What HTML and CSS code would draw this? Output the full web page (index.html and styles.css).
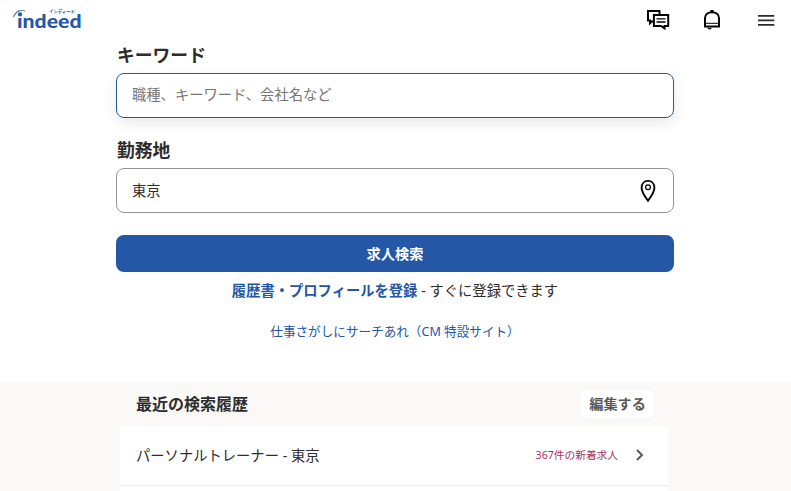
FILE: index.html
```
<!DOCTYPE html>
<html lang="ja">
<head>
  <meta charset="UTF-8" />
  <meta name="viewport" content="width=device-width, initial-scale=1.0"/>
  <title>求人検索 | Indeed</title>
  <link rel="stylesheet" href="styles.css">
</head>
<body>
  <header class="header">
    <a class="logo" href="#" aria-label="Indeed">
      <svg width="74" height="28" viewBox="0 0 74 28">
        <path d="M1.3 11.5C2.2 6.5 7.2 2.6 13.3 5C8.5 3.6 4 6 1.3 11.5Z" fill="#2557a7" stroke="#2557a7" stroke-width=".4"/>
        <circle cx="8" cy="8.4" r="2.1" fill="#2557a7"/>
        <text class="logo-text" x="5" y="22" textLength="64.5" lengthAdjust="spacingAndGlyphs">ındeed</text>
        <text class="logo-kana" x="37" y="7.4" textLength="26" lengthAdjust="spacingAndGlyphs">インディード</text>
      </svg>
    </a>
    <nav class="nav">
      <a href="#" aria-label="メッセージ">
        <svg width="24" height="24" viewBox="0 0 24 24" fill="none" stroke="#000" stroke-width="2">
          <path d="M7 13.5H5.5L4 15.2V12.5H2V3H13.5V6"/>
          <path d="M7.9 7H22.2V18H18.5V20.3L15 18H7.9Z"/>
          <path d="M10.5 10.9H19.5M10.5 14H19.5" stroke-width="1.3"/>
        </svg>
      </a>
      <a href="#" aria-label="お知らせ">
        <svg width="24" height="24" viewBox="0 0 24 24" fill="none" stroke="#000" stroke-width="2">
          <path d="M5 18.6V10.3C5 6.5 8 4.2 12 4.2S19 6.5 19 10.3V18.6Z"/>
          <path d="M5 15.3H19" stroke-width="1"/>
          <path d="M12 2V4.5" stroke-width="3.2"/>
          <path d="M8 19.5C8 21.2 11 21.2 11 19.5" stroke-width="1.2"/>
        </svg>
      </a>
      <a href="#" aria-label="メニュー">
        <svg width="24" height="24" viewBox="0 0 24 24" fill="none" stroke="#2d2d2d" stroke-width="1.8">
          <path d="M4 7.9H20.3M4 12.4H20.3M4 16.9H20.3"/>
        </svg>
      </a>
    </nav>
  </header>

  <main>
    <form class="search">
      <label class="label" for="what">キーワード</label>
      <div class="field active">
        <input id="what" type="text" placeholder="職種、キーワード、会社名など">
      </div>
      <label class="label" for="where">勤務地</label>
      <div class="field">
        <input id="where" type="text" value="東京">
        <svg width="20" height="24" viewBox="0 0 20 24" fill="none" stroke="#000">
          <path d="M10 21.7C6.3 16.8 3.6 12.6 3.6 8.7C3.6 4.8 6.2 1.9 10 1.9S16.4 4.8 16.4 8.7C16.4 12.6 13.7 16.8 10 21.7Z" stroke-width="1.9"/>
          <circle cx="10" cy="8.3" r="2.4" stroke-width="1.2"/>
        </svg>
      </div>
      <button class="submit" type="button">求人検索</button>
    </form>
    <p class="resume"><a href="#">履歴書・プロフィールを登録</a> - すぐに登録できます</p>
    <p class="promo"><a href="#">仕事さがしにサーチあれ（CM 特設サイト）</a></p>
  </main>

  <section class="history">
    <div class="history-head">
      <h2>最近の検索履歴</h2>
      <button class="edit" type="button">編集する</button>
    </div>
    <div class="history-list">
      <a class="history-item" href="#">
        <span class="query">パーソナルトレーナー - 東京</span>
        <span class="count">367件の新着求人</span>
        <svg width="10" height="14" viewBox="0 0 10 14" fill="none" stroke="#595959" stroke-width="2">
          <path d="M2 2L7 7L2 12"/>
        </svg>
      </a>
    </div>
  </section>
</body>
</html>
```

FILE: styles.css
```
* {
  box-sizing: border-box;
}

body {
  margin: 0;
  font-family: "Noto Sans", "Noto Sans CJK JP", sans-serif;
  font-size: 14.4px;
  color: #2d2d2d;
  background: #fff;
}

a {
  color: #2557a7;
  text-decoration: none;
}

.header {
  display: flex;
  justify-content: space-between;
  align-items: center;
  height: 40px;
  padding: 0 13px 0 12px;
}

.logo,
.nav,
.nav a {
  display: flex;
}

.logo-text {
  font-family: Lato, sans-serif;
  font-size: 19.5px;
  font-weight: 900;
  fill: #2557a7;
}

.logo-kana {
  font-family: "Noto Sans CJK JP", sans-serif;
  font-size: 4.3px;
  font-weight: 700;
  fill: #2557a7;
}

.nav {
  gap: 30px;
  margin-top: -1px;
}

.search {
  display: flex;
  flex-direction: column;
  width: 558px;
  margin: 0 auto 0 116px;
}

.label {
  height: 28px;
  margin-bottom: 5px;
  padding-left: 1px;
  font-size: 17.8px;
  font-weight: 700;
  line-height: 30px;
}

.field {
  display: flex;
  align-items: center;
  height: 45px;
  padding: 0 15px;
  border: 1px solid #949494;
  border-radius: 8px;
}

.field.active {
  margin-bottom: 17px;
  border-color: #2557a7;
  box-shadow: 0 5px 14px rgba(0, 0, 0, 0.09);
}

.field input {
  flex: 1;
  min-width: 0;
  padding: 0 0 2px;
  border: 0;
  outline: 0;
  background: none;
  font: inherit;
  font-size: 14.3px;
  color: inherit;
}

.field input::placeholder {
  color: #767676;
}

.submit {
  height: 37px;
  margin-top: 22px;
  padding: 0 0 2px;
  border: 0;
  border-radius: 8px;
  background: #2557a7;
  font: inherit;
  font-size: 14.2px;
  font-weight: 700;
  color: #fff;
}

.resume,
.promo {
  width: 558px;
  margin: 0 0 0 116px;
  text-align: center;
}

.resume {
  margin-top: 6px;
  font-size: 14.3px;
  line-height: 26px;
}

.resume a {
  font-weight: 700;
}

.promo {
  height: 64px;
  margin-top: 14px;
  font-size: 12.6px;
  line-height: 27px;
}

.history {
  height: 109px;
  padding: 8px 123px 0 120px;
  background: #faf9f8;
}

.history-head {
  display: flex;
  justify-content: space-between;
  align-items: center;
  height: 36px;
  padding: 0 14px 8px 16px;
}

.history-head h2 {
  margin: 0;
  font-size: 16px;
  line-height: 28px;
}

.edit {
  height: 28px;
  padding: 0 8px;
  border: 0;
  border-radius: 6px;
  background: #fff;
  font: inherit;
  font-size: 14.2px;
  font-weight: 700;
  line-height: 28px;
  color: #595959;
}

.history-list {
  height: 65px;
  background: #fff;
}

.history-item {
  display: flex;
  align-items: center;
  height: 60px;
  padding: 0 23px 2px 16px;
  border-bottom: 1px solid #ececec;
  color: #2d2d2d;
}

.query {
  flex: 1;
  padding-bottom: 1px;
  font-size: 14.3px;
}

.count {
  margin-right: 17px;
  font-size: 10.7px;
  color: #a9345f;
}
```
